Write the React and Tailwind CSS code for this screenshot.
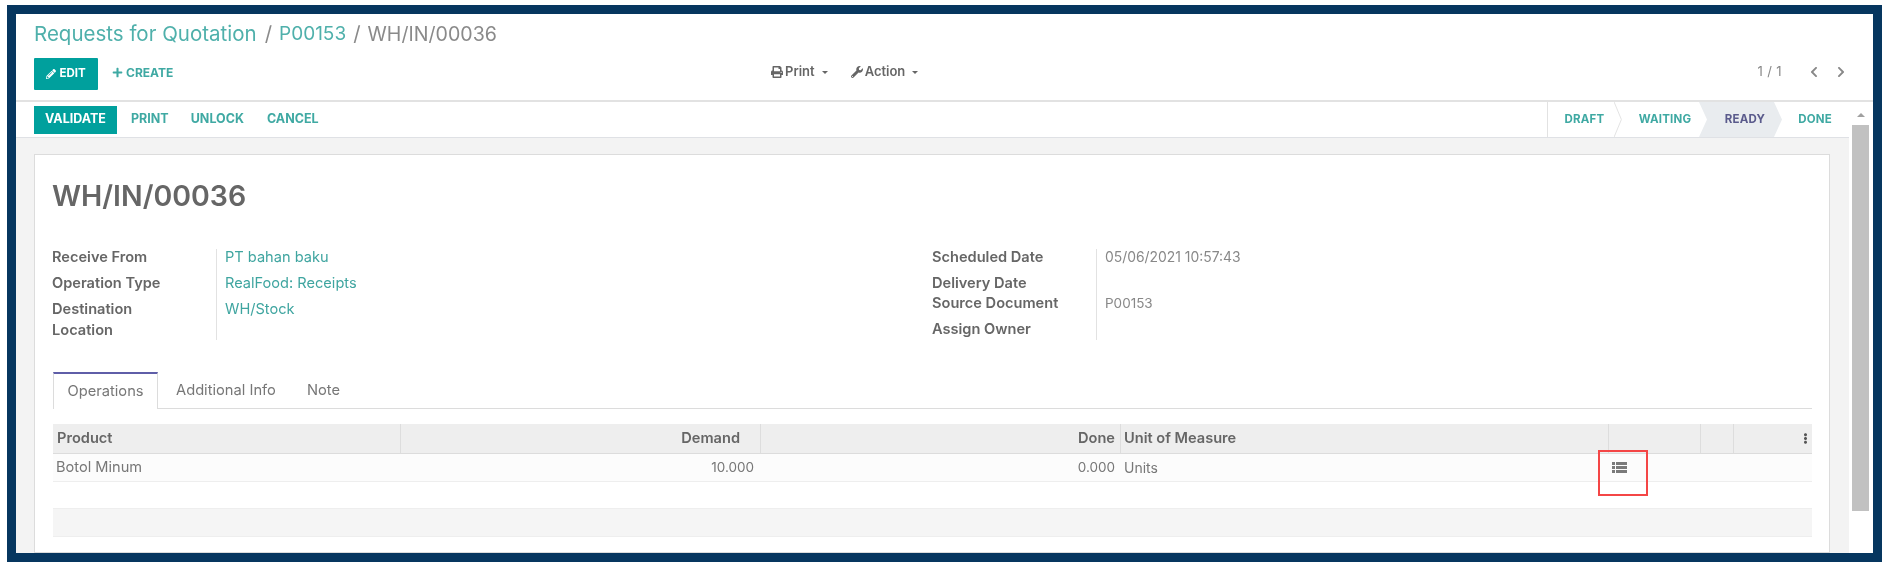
import React from "react";
import { FaPencilAlt, FaPlus, FaPrint, FaWrench, FaChevronLeft, FaChevronRight, FaEllipsisV } from "react-icons/fa";

const Caret = () => <span className="ml-[7px] inline-block h-0 w-0 border-x-[3.5px] border-t-[3.5px] border-x-transparent border-t-[#666]" />;

const ListIcon = () => (
  <svg width="15" height="11" viewBox="0 0 15 11" fill="#7a7a7a">
    <rect x="0" y="0" width="3" height="3" />
    <rect x="0" y="4" width="3" height="3" />
    <rect x="0" y="8" width="3" height="3" />
    <rect x="4" y="0" width="11" height="3" />
    <rect x="4" y="4" width="11" height="3" />
    <rect x="4" y="8" width="11" height="3" />
  </svg>
);

function Status() {
  return (
    <div className="flex h-full w-[302px] shrink-0 border-l border-[#e2e2e2] text-[11.5px] font-bold tracking-[0.2px] text-[#3fa9a3]">
      <div className="relative flex w-[74px] items-center justify-center pl-[1px] pr-[2px]">
        DRAFT
      </div>
      <svg className="-ml-[8px] h-full w-[8px] shrink-0" viewBox="0 0 8 36" fill="none" stroke="#e2e2e2"><path d="M0 0 L7.5 18 L0 36" /></svg>
      <div className="flex w-[85px] items-center justify-center pl-[1px]">WAITING</div>
      <div className="-ml-[8px] flex w-[83px] items-center justify-center bg-[#e9ecef] pl-[9px] text-[#5b5b8c] [clip-path:polygon(0_0,calc(100%-8px)_0,100%_50%,calc(100%-8px)_100%,0_100%,8px_50%)]">READY</div>
      <div className="-ml-[8px] flex w-[74px] items-center justify-center pl-[8px]">DONE</div>
    </div>
  );
}

export default function App() {
  return (
    <div className="h-[574px] w-[1900px] overflow-hidden bg-white pt-[5px] pl-[7px] [font-family:Inter,'Open_Sans',sans-serif]">
      <div className="relative h-[557px] w-[1875px] border-[9px] border-[#06365f] bg-white blur-[0.5px]">
        <div className="flex h-full flex-col">
          {/* control panel */}
          <div className="h-[88px] shrink-0 border-b-2 border-[#e2e2e2] pl-[18px]">
            <div className="flex h-[39px] items-center pt-[2px] text-[20.5px] text-[#8a8a8a]">
              <span className="text-[#4fb0ab]">Requests for Quotation</span>
              <span className="ml-[8px] mr-[7px]">/</span>
              <span className="text-[19px] text-[#4fb0ab]">P00153</span>
              <span className="mx-[7px]">/</span>
              <span className="text-[19.6px]">WH/IN/00036</span>
            </div>
            <div className="flex items-start pt-[5px]">
              <div className="flex h-[32px] w-[64px] shrink-0 items-center justify-center gap-[3px] rounded-[1px] bg-[#00a09d] text-[11.5px] font-bold text-white">
                <FaPencilAlt className="text-[10px]" />EDIT
              </div>
              <div className="ml-[14px] flex h-[29px] w-[659px] shrink-0 items-center gap-[3px] text-[12px] font-bold text-[#3fa9a3]">
                <FaPlus className="text-[11px]" />CREATE
              </div>
              <div className="flex h-[28px] items-center text-[13px] font-semibold text-[#666]">
                <FaPrint className="mr-[2px] text-[12px]" />Print<Caret />
                <FaWrench className="ml-[23px] mr-[2px] text-[12px]" />Action<Caret />
              </div>
              <div className="ml-auto mr-[26px] flex h-[28px] items-center text-[#888]">
                <span className="mr-[26px] text-[13px] tracking-[0.4px]">1 / 1</span>
                <FaChevronLeft className="mr-[15px] text-[12px]" />
                <FaChevronRight className="text-[12px]" />
              </div>
            </div>
          </div>
          <div className="flex min-h-0 flex-1">
            <div className="flex min-w-0 flex-1 flex-col">
              {/* action bar */}
              <div className="flex h-[36px] shrink-0 items-center justify-between border-b border-[#dfe1e5] pl-[18px]">
                <div className="flex items-center text-[12.5px] font-bold text-[#3fa9a3]">
                  <div className="flex h-[28px] w-[83px] items-center justify-center bg-[#00a09d] text-white">VALIDATE</div>
                  <span className="ml-[14px]">PRINT</span>
                  <span className="ml-[22px]">UNLOCK</span>
                  <span className="ml-[23px]">CANCEL</span>
                </div>
                <Status />
              </div>
              {/* sheet */}
              <div className="min-h-0 flex-1 overflow-hidden bg-[#f3f3f3] pl-[18px] pr-[19px] pt-[16px]">
                <div className="h-full border border-[#dcdcdc] bg-white pl-[17px] pr-[17px] pt-[20px]">
                  <div className="text-[28.5px] leading-[42px] font-semibold text-[#666]">WH/IN/00036</div>
                  <div className="mt-[32px] flex h-[91px]">
                    <div className="w-[880px] shrink-0">
                      <div className="flex h-full">
                        <div className="-mt-[2px] w-[164px] shrink-0 text-[14.6px] font-semibold text-[#666]">
                          <div className="h-[26px] leading-[21px]">Receive From</div>
                          <div className="h-[26px] leading-[21px]">Operation Type</div>
                          <div className="leading-[21px]">Destination<br />Location</div>
                        </div>
                        <div className="w-[9px] shrink-0 border-l border-[#e2e2e2]" />
                        <div className="-mt-[2px] text-[14.6px] text-[#3fa5a0]">
                          <div className="h-[26px] leading-[21px]">PT bahan baku</div>
                          <div className="h-[26px] leading-[21px]">RealFood: Receipts</div>
                          <div className="leading-[21px]">WH/Stock</div>
                        </div>
                      </div>
                    </div>
                    <div className="flex h-full">
                      <div className="-mt-[2px] w-[164px] shrink-0 text-[14.6px] font-semibold text-[#666]">
                        <div className="h-[26px] leading-[21px]">Scheduled Date</div>
                        <div className="h-[20px] leading-[21px]">Delivery Date</div>
                        <div className="h-[26px] leading-[21px]">Source Document</div>
                        <div className="leading-[21px]">Assign Owner</div>
                      </div>
                      <div className="w-[9px] shrink-0 border-l border-[#e2e2e2]" />
                      <div className="-mt-[2px] text-[13.9px] text-[#888]">
                        <div className="h-[46px] leading-[21px]">05/06/2021 10:57:43</div>
                        <div className="text-[13.5px] leading-[21px]">P00153</div>
                      </div>
                    </div>
                  </div>
                  {/* tabs */}
                  <div className="mt-[32px] ml-[1px] flex h-[37px] border-b border-[#dcdcdc] text-[14.7px] text-[#777]">
                    <div className="-mb-px flex w-[105px] items-center justify-center border-x border-t-2 border-x-[#dcdcdc] border-t-[#5f5ea8] bg-white">Operations</div>
                    <div className="ml-[18px] flex items-center">Additional Info</div>
                    <div className="ml-[31px] flex items-center">Note</div>
                  </div>
                  {/* table */}
                  <div className="relative mt-[15px] ml-[1px] text-[14.6px] text-[#777]">
                    <div className="flex h-[30px] items-center border-b border-[#dcdcdc] bg-[#eeeeee] font-semibold text-[#666]">
                      <div className="w-[347px] shrink-0 pl-[4px]">Product</div>
                      <div className="h-full w-[360px] shrink-0 border-l border-[#dddddd] pr-[20px] text-right leading-[29px]">Demand</div>
                      <div className="h-full w-[360px] shrink-0 border-l border-[#dddddd] pr-[5px] text-right leading-[29px]">Done</div>
                      <div className="h-full w-[488px] shrink-0 border-l border-[#dddddd] pl-[3px] leading-[29px]">Unit of Measure</div>
                      <div className="h-full w-[92px] shrink-0 border-l border-[#dddddd]" />
                      <div className="h-full w-[33px] shrink-0 border-l border-[#dddddd]" />
                      <div className="flex h-full flex-1 items-center justify-end border-l border-[#dddddd] pr-[1px] text-[11px] text-[#555]"><FaEllipsisV /></div>
                    </div>
                    <div className="flex h-[28px] items-center border-b border-[#eeeeee] bg-[#fcfcfc]">
                      <div className="w-[347px] shrink-0 pl-[3px]">Botol Minum</div>
                      <div className="w-[360px] shrink-0 pr-[6px] text-right text-[13.5px]">10.000</div>
                      <div className="w-[360px] shrink-0 pr-[5px] text-right text-[13.5px]">0.000</div>
                      <div className="w-[488px] shrink-0 pl-[4px] text-[14px]">Units</div>
                      <div className="pl-[4px]"><ListIcon /></div>
                    </div>
                    <div className="h-[26px] bg-white" />
                    <div className="h-[29px] border-y border-[#eeeeee] bg-[#f5f5f5]" />
                    <div className="absolute left-[1545px] top-[26px] h-[46px] w-[50px] border-2 border-[#f44646]" />
                  </div>
                </div>
              </div>
            </div>
            {/* scrollbar */}
            <div className="flex w-[24px] shrink-0 flex-col items-center bg-white pr-[1px]">
              <div className="mt-[11px] h-0 w-0 border-x-[4px] border-b-[4px] border-x-transparent border-b-[#a0a0a0]" />
              <div className="mt-[8px] h-[386px] w-[17px] bg-[#c1c1c1]" />
            </div>
          </div>
        </div>
      </div>
    </div>
  );
}
